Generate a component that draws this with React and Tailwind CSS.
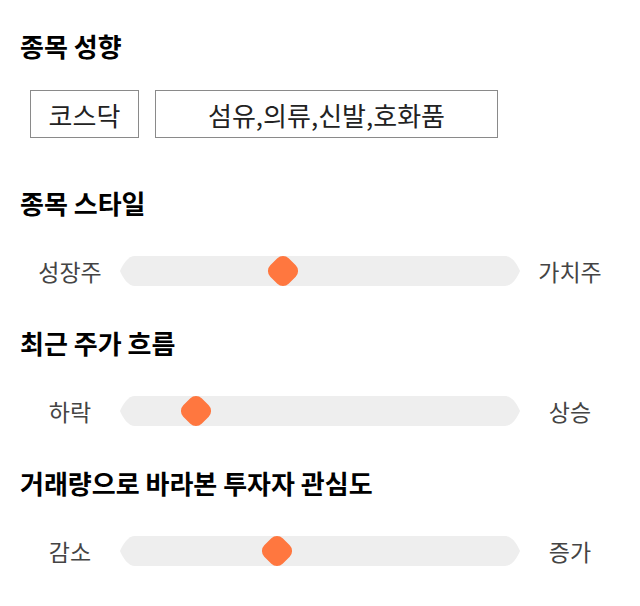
import React from "react";

const font = { fontFamily: '"Noto Sans CJK KR", "Noto Sans", sans-serif' };

function Track({ pos }) {
  return (
    <div className="relative w-[400px] h-[30px]">
      <svg width="400" height="30" viewBox="0 0 400 30" className="absolute inset-0">
        <path
          d="M15,0 H385 C392,0 397,8 400,15 C397,22 392,30 385,30 H15 C8,30 3,22 0,15 C3,8 8,0 15,0 Z"
          fill="#eeeeee"
        />
      </svg>
      <div
        className="absolute top-[2px] w-[26px] h-[26px] rotate-45 rounded-[8px] bg-[#ff773f]"
        style={{ left: pos - 13 }}
      />
    </div>
  );
}

function Slider({ left, right, pos, mt }) {
  return (
    <div className={`flex items-center h-[30px] ${mt}`}>
      <div className="w-[100px] text-center text-[23px] leading-[30px] text-[#444444]">{left}</div>
      <Track pos={pos} />
      <div className="w-[100px] text-center text-[23px] leading-[30px] text-[#444444]">{right}</div>
    </div>
  );
}

function Heading({ children, mt }) {
  return (
    <div className={`h-[30px] leading-[30px] text-[26px] font-bold text-black ${mt}`}>{children}</div>
  );
}

export default function App() {
  return (
    <div className="w-[640px] h-[606px] bg-white px-[20px] pt-[31px]" style={font}>
      <Heading mt="mt-0">종목 성향</Heading>
      <div className="flex gap-[16px] mt-[29px] ml-[10px]">
        <div className="w-[109px] h-[48px] border border-[#8a8a8a] flex items-center justify-center text-[26px] text-[#222222]">
          코스닥
        </div>
        <div className="w-[343px] h-[48px] border border-[#8a8a8a] flex items-center justify-center text-[26px] text-[#222222]">
          섬유,의류,신발,호화품
        </div>
      </div>
      <Heading mt="mt-[50px]">종목 스타일</Heading>
      <Slider left="성장주" right="가치주" pos={163} mt="mt-[38px]" />
      <Heading mt="mt-[42px]">최근 주가 흐름</Heading>
      <Slider left="하락" right="상승" pos={76} mt="mt-[38px]" />
      <Heading mt="mt-[42px]">거래량으로 바라본 투자자 관심도</Heading>
      <Slider left="감소" right="증가" pos={157} mt="mt-[38px]" />
    </div>
  );
}
